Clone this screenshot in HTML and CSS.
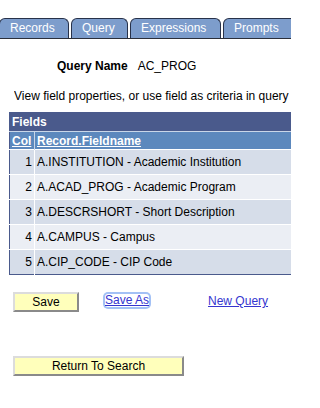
FILE: index.html
```html
<!DOCTYPE html>
<html>
<head>
<meta charset="utf-8">
<link rel="stylesheet" href="styles.css">
</head>
<body>
<div class="page">
<div class="tabs">
  <div class="tab tab-records">Records</div>
  <div class="tab tab-query">Query</div>
  <div class="tab tab-expr">Expressions</div>
  <div class="tab tab-prompts">Prompts</div>
</div>
<div class="qname">
  <span class="qlabel">Query Name</span>
  <span class="qval">AC_PROG</span>
</div>
<p class="hint">View field properties, or use field as criteria in query statement.</p>
<table class="grid">
  <tr><th class="title" colspan="2">Fields</th></tr>
  <tr class="colhead">
    <th class="c-col"><a href="#">Col</a></th>
    <th class="c-name"><a href="#">Record.Fieldname</a></th>
  </tr>
  <tr class="odd"><td class="c-col">1</td><td class="c-name">A.INSTITUTION - Academic Institution</td></tr>
  <tr class="even"><td class="c-col">2</td><td class="c-name">A.ACAD_PROG - Academic Program</td></tr>
  <tr class="odd"><td class="c-col">3</td><td class="c-name">A.DESCRSHORT - Short Description</td></tr>
  <tr class="even"><td class="c-col">4</td><td class="c-name">A.CAMPUS - Campus</td></tr>
  <tr class="odd"><td class="c-col">5</td><td class="c-name">A.CIP_CODE - CIP Code</td></tr>
</table>
<div class="actions">
  <button class="btn btn-save">Save</button>
  <a class="link link-saveas" href="#">Save As</a>
  <a class="link link-new" href="#">New Query</a>
</div>
<div class="ret">
  <button class="btn btn-return">Return To Search</button>
</div>
</div>
</body>
</html>
```
FILE: styles.css
```css
html, body {
  margin: 0;
  padding: 0;
  overflow: hidden;
  width: 291px;
  height: 408px;
}
body {
  background: #fff;
  font-family: "Liberation Sans", Arial, sans-serif;
  font-size: 12px;
  color: #000;
}
.page {
  width: 291px;
  height: 408px;
  overflow: hidden;
  position: relative;
}
.tabs {
  display: flex;
  gap: 2px;
  padding-top: 18px;
  height: 20px;
  border-bottom: 1px solid #2b2f3a;
  margin-left: -1px;
}
.tab {
  box-sizing: border-box;
  height: 20px;
  padding-left: 10px;
  line-height: 19px;
  color: #fff;
  background: #7d9dcc;
  border: 1px solid #28324a;
  border-bottom: none;
  border-radius: 6px 6px 0 0;
  white-space: nowrap;
  flex: none;
}
.tab-records { width: 70px; }
.tab-query { width: 57px; }
.tab-expr { width: 91px; }
.tab-prompts { width: 90px; }

.qname {
  margin: 20px 0 0 57px;
  line-height: 14px;
  display: flex;
  gap: 10px;
}
.qlabel { font-weight: bold; }

.hint {
  margin: 16px 0 0 14px;
  line-height: 14px;
  white-space: nowrap;
  overflow: hidden;
}

.grid {
  margin: 9px 0 0 9px;
  border-collapse: collapse;
  border: 1px solid #4a5a8c;
  width: 300px;
}
.grid th, .grid td {
  padding: 0;
}
.grid .title {
  background: #4a5a8c;
  color: #fff;
  font-weight: bold;
  text-align: left;
  height: 18px;
  padding-left: 2px;
  font-size: 12px;
}
.colhead th {
  background: #5c88bd;
  height: 17px;
  text-align: left;
  border-top: 1px solid #c9d6e8;
  border-right: 1px solid #c9d6e8;
}
.colhead th a {
  color: #fff;
  font-weight: bold;
}
.colhead .c-col { padding-left: 2px; }
.colhead .c-name { padding-left: 2px; }
.grid td {
  height: 24px;
  border-top: 1px solid #fff;
  border-right: 1px solid #fff;
}
.grid td.c-col {
  width: 22px;
  text-align: right;
  padding-right: 2px;
}
.grid td.c-name {
  padding-left: 2px;
  white-space: nowrap;
}
.odd td { background: #d6dde9; }
.even td { background: #ebeef4; }

.actions {
  display: flex;
  align-items: center;
  margin: 17px 0 0 13px;
  height: 20px;
}
.btn {
  box-sizing: border-box;
  height: 20px;
  padding: 0;
  background: #ffffbb;
  border: 2px solid;
  border-color: #dcdcdc #8a8a8a #8a8a8a #dcdcdc;
  font-family: "Liberation Sans", Arial, sans-serif;
  font-size: 12px;
  color: #000;
  line-height: 16px;
}
.btn-save { width: 66px; }
.link {
  color: #3535cf;
  line-height: 13px;
}
.link-saveas {
  margin-left: 26px;
  border-radius: 3px;
  box-shadow: 0 0 0 2px #a3c1f5;
  margin-top: -4px;
}
.link-new { margin-left: 59px; margin-top: -1px; }
.ret {
  margin: 44px 0 0 13px;
}
.btn-return { width: 171px; }
```
